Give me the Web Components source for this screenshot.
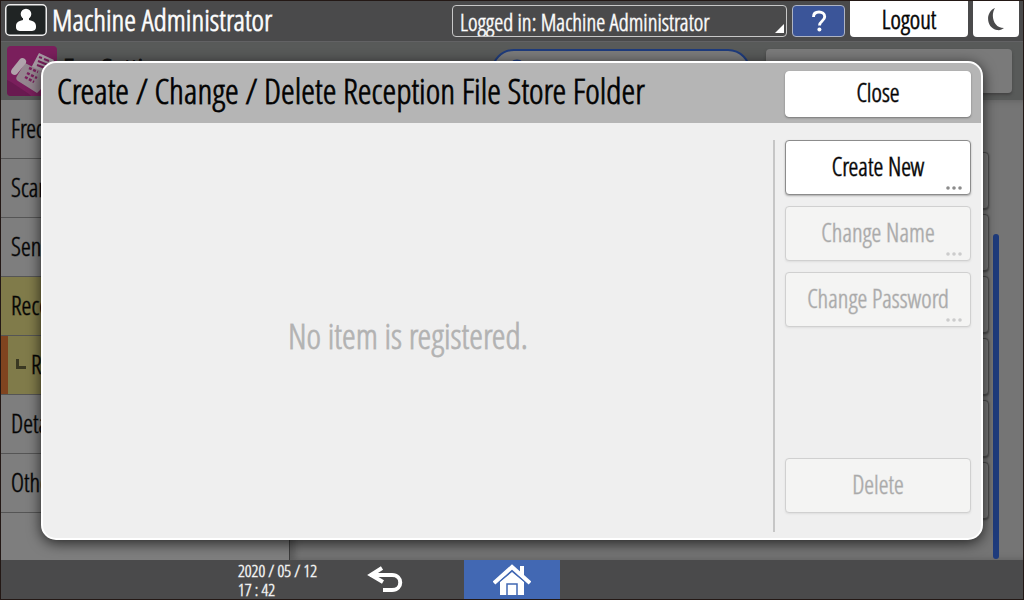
<!DOCTYPE html>
<html lang="en">
<head>
<meta charset="utf-8">
<meta name="viewport" content="width=device-width, initial-scale=1">
<title>Machine Administrator</title>
<style>
html, body { margin: 0; height: 100%; }
body {
  font-family: "Open Sans Condensed Light", "Roboto Condensed", "Open Sans", sans-serif;
  font-weight: 300;
  font-size: 25px;
  --bar: #4a4a4b;
  --ink: #000;
}
</style>
</head>
<body>
<mfp-screen>
  <mfp-top-bar slot="top" user="Machine Administrator"></mfp-top-bar>
  <mfp-section-bar slot="section" heading="Fax Settings"></mfp-section-bar>
  <mfp-side-menu slot="menu">
    <mfp-menu-item>Frequently Used</mfp-menu-item>
    <mfp-menu-item>Scan Settings</mfp-menu-item>
    <mfp-menu-item>Send Settings</mfp-menu-item>
    <mfp-menu-item open>Reception Settings</mfp-menu-item>
    <mfp-menu-item open current>Reception File Settings</mfp-menu-item>
    <mfp-menu-item>Detailed Settings</mfp-menu-item>
    <mfp-menu-item>Others</mfp-menu-item>
  </mfp-side-menu>
  <mfp-setting-list slot="content"></mfp-setting-list>
  <mfp-bottom-bar slot="bottom"></mfp-bottom-bar>
  <mfp-dialog slot="dialog" heading="Create / Change / Delete Reception File Store Folder">
    <span slot="empty">No item is registered.</span>
    <mfp-button slot="actions" more>Create New</mfp-button>
    <mfp-button slot="actions" more disabled>Change Name</mfp-button>
    <mfp-button slot="actions" more disabled>Change Password</mfp-button>
    <mfp-button slot="footer" disabled>Delete</mfp-button>
  </mfp-dialog>
</mfp-screen>

<script>
const base = `<style>
  * { box-sizing: border-box; }
  button, select, input { font: inherit; margin: 0; padding: 0; -webkit-text-stroke: inherit; }
  svg { display: block; flex: none; }
</style>`;

function define(name, render) {
  customElements.define(name, class extends HTMLElement {
    constructor() {
      super();
      this.attachShadow({ mode: 'open' });
    }
    connectedCallback() {
      this.shadowRoot.innerHTML = base + render(this);
    }
  });
}

define('mfp-screen', () => `
  <style>
    :host { display: flex; flex-direction: column; position: relative; box-sizing: border-box;
      min-height: 100vh; border: 1px solid #231815; background: #757575; overflow: hidden; }
    .body { flex: 1; display: grid; grid-template-columns: minmax(160px, 289px) 1fr; }
  </style>
  <slot name="top"></slot>
  <slot name="section"></slot>
  <div class="body"><slot name="menu"></slot><slot name="content"></slot></div>
  <slot name="bottom"></slot>
  <slot name="dialog"></slot>`);

define('mfp-top-bar', el => `
  <style>
    :host { display: flex; align-items: flex-start; gap: 5px; height: 41px; box-sizing: border-box;
      padding: 0 4px; background: var(--bar); border-bottom: 1px solid #626264; color: #fff; }
    .avatar { margin-top: 3px; }
    h1 { flex: 1; margin: 0; font-size: 30px; font-weight: 300; line-height: 38px; white-space: nowrap;
      -webkit-text-stroke: 1px rgba(255,255,255,.8); }
    .login { position: relative; margin-top: 4px; width: 335px; }
    select { appearance: none; display: block; width: 100%; height: 32px; padding: 0 20px 0 7px; font-size: 23px;
      line-height: 32px; color: #fff; background: transparent; border: 1px solid #c8c8c8; border-radius: 4px;
      -webkit-text-stroke: 1px rgba(255,255,255,.6); }
    .corner { position: absolute; right: 3px; bottom: 4px; pointer-events: none; }
    button { display: flex; align-items: center; justify-content: center; height: 36px; border: 0;
      border-radius: 0 0 4px 4px; background: #fff; color: #000; }
    .help { width: 53px; height: 32px; margin-top: 4px; background: #3b5599; border: 1px solid #aeb4c4; border-radius: 4px; }
    .logout { width: 118px; -webkit-text-stroke: 1px rgba(0,0,0,.7); }
    .night { width: 46px; }
  </style>
  <svg class="avatar" width="42" height="32" viewBox="0 0 42 32"><rect x=".75" y=".75" width="40.500" height="30.500" rx="4" fill="#202424" stroke="#eee" stroke-width="1.500"/>
    <circle cx="21" cy="10" r="5.300" fill="#fff"/><path d="M18 13h6v3c5 1 7 3 7 6v1c0 3-2 4-5 4H16c-3 0-5-1-5-4v-1c0-3 2-5 7-6z" fill="#fff"/></svg>
  <h1>${el.getAttribute('user')}</h1>
  <div class="login">
    <select aria-label="Logged in user"><option>Logged in: ${el.getAttribute('user')}</option></select>
    <svg class="corner" width="9" height="9" viewBox="0 0 9 9"><path d="M9 0v9H0z" fill="#fff"/></svg>
  </div>
  <button class="help" aria-label="Help"><svg width="20" height="24" viewBox="0 0 20 24"><path d="M4.500 8C4.500 4.500 7 3 10 3s5.700 1.700 5.700 4.700c0 4.300-5.200 4.300-5.200 8.800" fill="none" stroke="#fff" stroke-width="2.900"/><circle cx="10.400" cy="20.500" r="2" fill="#fff"/></svg></button>
  <button class="logout">Logout</button>
  <button class="night" aria-label="Sleep"><svg width="20" height="24" viewBox="0 0 20 24"><path d="M9 1C-1 5 0 21 11 23c3 .5 5-.5 7-2C8 21 4 9 9 1z" fill="#4a4a4b"/></svg></button>`);

define('mfp-section-bar', el => `
  <style>
    :host { display: flex; align-items: flex-start; height: 58px; box-sizing: border-box;
      padding: 4px 11px 0 6px; background: #585a59; }
    h2 { flex: 1; margin: 0 0 0 6px; font-size: 30px; font-weight: 300; line-height: 46px; white-space: nowrap; color: #111;
      -webkit-text-stroke: 1px #111; }
    .search { display: flex; width: 260px; height: 46px; margin: 3px 15px 0 0; padding: 8px 16px; gap: 8px;
      background: #7b7b7b; border: 2px solid #1e3b7c; border-radius: 23px; }
    input { flex: 1; min-width: 0; border: 0; background: transparent; }
    button { width: 246px; height: 44px; margin-top: 3px; border: 0; border-radius: 4px; background: #7a7a7a;
      line-height: 40px; box-shadow: 0 2px 3px #444; }
  </style>
  <svg width="50" height="50" viewBox="0 0 50 50">
    <rect width="50" height="50" rx="4" fill="#7a1f5c"/>
    <path d="M0 34l4 2 18 12 2 2H4q-4 0-4-4z" fill="#691a50"/>
    <path d="M32 7l15 7-8 15-15-7z" fill="#a69aa3"/>
    <path d="M32 11l3 1m2 1l5 2m-11 0l10 4m-11 0l8 3" stroke="#7a1f5c" stroke-width="2"/>
    <path d="M18 17l22 11-3 12-7 7-19-12q-3-2-1-5z" fill="#94868f"/>
    <path d="M13 13q2-2 5 0 2 2 1 4L10 28q-2 2-5 0-2-2 0-5z" fill="#b0a4ac"/>
    <path d="M22 22l9 4m-11 1l10 5m-12-1l9 5" stroke="#7a1f5c" stroke-width="2.500" stroke-dasharray="3 1.500"/>
  </svg>
  <h2>${el.getAttribute('heading')}</h2>
  <label class="search"><svg width="18" height="24" viewBox="0 0 18 24"><circle cx="8" cy="9" r="7" fill="none" stroke="#1e3b7c" stroke-width="3"/><path d="M12 15l5 7" stroke="#1e3b7c" stroke-width="3"/></svg><input type="search" aria-label="Search"></label>
  <button>Index Code List</button>`);

define('mfp-side-menu', () => `
  <style>
    :host { display: block; background: #7e7e7e; border-right: 1px solid #3c3c3c; }
    nav { display: flex; flex-direction: column; }
  </style>
  <nav><slot></slot></nav>`);

define('mfp-menu-item', el => {
  const current = el.hasAttribute('current');
  return `
  <style>
    :host { display: block; background: #7e7e7e; border-bottom: 1px solid #555; }
    :host([open]) { background: #807b4a; }
    a { display: flex; align-items: center; height: 58px; padding: 0 0 2px 10px; color: #050505; text-decoration: none;
      white-space: nowrap; overflow: hidden; -webkit-text-stroke: 1px rgba(0,0,0,.5); }
    :host([current]) a { border-left: 7px solid #80441f; padding-left: 8px; gap: 5px; }
  </style>
  <a href="#">${current ? '<svg width="10" height="10" viewBox="0 0 10 10"><path d="M0 0h3v7h7v3H0z" fill="#3a3822"/></svg>' : ''}<slot></slot></a>`;
});

define('mfp-setting-list', () => `
  <style>
    :host { display: flex; gap: 4px; padding: 52px 24px 0 6px; box-shadow: inset 5px 0 6px #5c5c5c; }
    ul { flex: 1; margin: 0; padding: 0; list-style: none; display: flex; flex-direction: column; gap: 5px; }
    li { height: 57px; border: 1px solid #4c4c4c; border-radius: 4px; background: #7a7a7a; box-shadow: 0 1px 2px #444; }
    .scroll { width: 6px; margin: 82px 0 1px; border-radius: 3px; background: #1e3b7c; }
  </style>
  <ul><li></li><li></li><li></li><li></li><li></li><li></li></ul>
  <div class="scroll"></div>`);

define('mfp-bottom-bar', () => `
  <style>
    :host { display: grid; grid-template-columns: 1fr 96px 1fr; height: 39px; background: var(--bar); color: #fff; }
    .left { display: flex; justify-content: flex-end; align-items: center; gap: 50px; padding-right: 61px; }
    time { font-size: 17px; line-height: 19px; white-space: nowrap; -webkit-text-stroke: 1px rgba(255,255,255,.5); }
    button { border: 0; background: none; display: flex; align-items: center; justify-content: center; }
    .home { background: #4268b3; }
  </style>
  <div class="left">
    <time datetime="2020-05-12T17:42">2020 / 05 / 12<br>17 : 42</time>
    <button aria-label="Back"><svg width="36" height="28" viewBox="0 0 36 28"><path d="M15 2L4 9l12 7M3 9h22c11 0 11 15 0 15h-9" fill="none" stroke="#fff" stroke-width="4"/></svg></button>
  </div>
  <button class="home" aria-label="Home"><svg width="38" height="32" viewBox="0 0 38 32">
    <path d="M27 2h4v10l-4-4z" fill="#fff"/><path d="M1 19L19 3l18 16" fill="none" stroke="#fff" stroke-width="4"/>
    <path d="M7 18L19 8l12 10v13H7z" fill="#fff"/><path d="M14 31V20h10v11" fill="none" stroke="#4268b3" stroke-width="1.500"/><path d="M5.500 18.500L19 7l13.500 11.500" fill="none" stroke="#4268b3" stroke-width="1"/></svg></button>`);

define('mfp-button', el => `
  <style>
    :host { display: block; }
    button { position: relative; display: block; width: 100%; height: 55px; padding-bottom: 4px; border: 1px solid #8c8c8c; border-radius: 4px;
      background: #fff; color: var(--ink); box-shadow: 0 1px 2px #aaa; -webkit-text-stroke: 1px rgba(0,0,0,.6); }
    button:disabled { color: #a9a9a9; background: #f4f4f3; border-color: #d0d0d0; box-shadow: 0 1px 2px #ddd;
      -webkit-text-stroke: 1px rgba(169,169,169,.5); }
    .plain { height: 46px; border-color: #fff; box-shadow: 0 1px 2px #777; }
    svg { position: absolute; right: 8px; bottom: 4px; fill: #8c8c8c; }
    :disabled svg { fill: #ccc; }
  </style>
  <button class="${el.hasAttribute('plain') ? 'plain' : ''}" ${el.hasAttribute('disabled') ? 'disabled' : ''}><slot></slot>
  ${el.hasAttribute('more') ? '<svg width="16" height="4" viewBox="0 0 16 4"><circle cx="2" cy="2" r="1.800"/><circle cx="8" cy="2" r="1.800"/><circle cx="14" cy="2" r="1.800"/></svg>' : ''}</button>`);

define('mfp-dialog', el => `
  <style>
    :host { position: absolute; inset: 60px 40px 59px; display: flex; flex-direction: column; box-sizing: border-box;
      border: 2px solid #fff; border-radius: 15px; background: #efefef; overflow: hidden; box-shadow: 0 3px 14px rgba(0,0,0,.7); }
    header { display: grid; grid-template-columns: 1fr 186px; height: 60px; padding: 8px 10px 0 14px; background: #b5b5b5; }
    h2 { margin: 0; font-size: 35px; font-weight: 300; line-height: 40px; white-space: nowrap; -webkit-text-stroke: 1px rgba(0,0,0,.8); }
    .body { flex: 1; display: grid; grid-template-columns: 1fr 198px; padding: 17px 10px 6px 0; }
    .list { display: grid; place-items: center; font-size: 35px; line-height: 40px; color: #b2b2b2; -webkit-text-stroke: 1px rgba(178,178,178,.8); }
    .side { display: flex; flex-direction: column; gap: 11px; border-left: 2px solid #c6c6c6; padding: 0 0 19px 10px; }
    .footer { margin-top: auto; }
  </style>
  <header><h2>${el.getAttribute('heading')}</h2><mfp-button plain>Close</mfp-button></header>
  <div class="body">
    <div class="list"><slot name="empty"></slot></div>
    <div class="side"><slot name="actions"></slot><div class="footer"><slot name="footer"></slot></div></div>
  </div>`);
</script>
</body>
</html>
